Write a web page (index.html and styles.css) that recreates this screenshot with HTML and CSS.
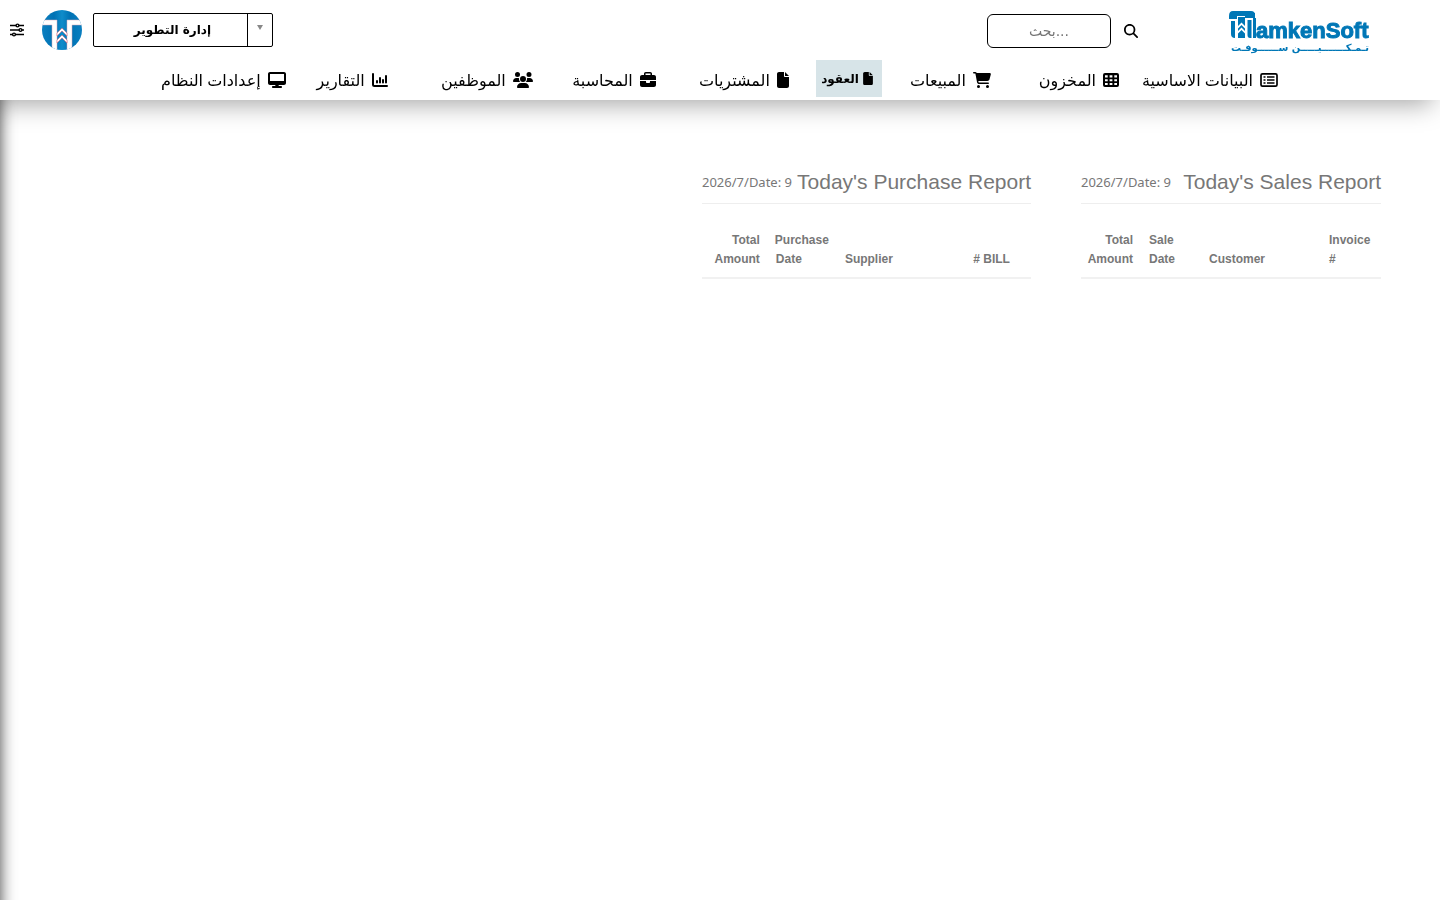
FILE: index.html
```html
<!DOCTYPE html>
<html lang="ar" dir="rtl">
<head>
<meta charset="utf-8">
<title>TamkenSoft</title>
<link rel="stylesheet" href="styles.css">
</head>
<body>
<header class="header">
  <div class="topbar">
    <a class="brand" href="#" aria-label="TamkenSoft">
      <svg class="brand-logo" viewBox="0 0 142 44" direction="ltr">
        <path fill="#0077b6" d="M5 1H23Q27 1 27 5V6H9V9H1V6Q1 1 5 1ZM3 11H7V28Q3 28 3 24ZM10 7H17V16L13.500 12.500L10 16ZM10 18.500L13.500 15L17 18.500V21L13.500 17.500L10 21ZM10 23.500L13.500 20L17 23.500V28H10ZM17 3H27V8H17ZM19.500 10H23.500V28H22Q19.500 28 19.500 25ZM25 8H28V28H25Z"/>
        <text x="28" y="28" class="brand-name">amkenSoft</text>
        <text x="72" y="41" class="brand-sub">تـمـكـــــــيـــــن ســــــوفـت</text>
      </svg>
    </a>
    <form class="search">
      <button class="icon-btn" type="button" aria-label="بحث">
        <svg width="14" height="14" viewBox="0 0 512 512"><path d="M416 208c0 45.900-14.900 88.300-40 122.700L502.600 457.400c12.500 12.500 12.500 32.800 0 45.300s-32.800 12.500-45.300 0L330.700 376c-34.400 25.200-76.800 40-122.700 40C93.100 416 0 322.900 0 208S93.100 0 208 0S416 93.100 416 208zM208 352a144 144 0 1 0 0-288 144 144 0 1 0 0 288z"/></svg>
      </button>
      <input class="search-input" type="text" placeholder="بحث..." aria-label="بحث" dir="ltr">
    </form>
    <div class="account">
      <div class="select-wrap">
        <select class="select" aria-label="الإدارة"><option>إدارة التطوير</option></select>
        <span class="select-arrow"></span>
      </div>
      <svg class="badge-logo" width="40" height="40" viewBox="0 0 40 40">
        <defs>
          <linearGradient id="disc" x1="0" x2="1" y1="0" y2="0"><stop offset="0" stop-color="#0a7fc0"/><stop offset=".3" stop-color="#0072b4"/><stop offset=".5" stop-color="#0f8cca"/><stop offset=".7" stop-color="#0072b4"/><stop offset="1" stop-color="#0a7fc0"/></linearGradient>
          <clipPath id="round"><circle cx="20" cy="20" r="20"/></clipPath>
        </defs>
        <g clip-path="url(#round)">
          <rect width="40" height="40" fill="url(#disc)"/>
          <path d="M0 10H15V40H10V15H0ZM40 10H25V40H30V15H40Z" fill="#fff" stroke="#dba6b4" stroke-width=".5"/>
          <path d="M15 23L20 18L25 23V26L20 21L15 26ZM15 30L20 25L25 30V33L20 28L15 33Z" fill="#fff" stroke="#d34b5c" stroke-width=".5"/>
        </g>
      </svg>
      <button class="icon-btn" type="button" aria-label="خيارات">
        <svg width="14" height="14" viewBox="0 0 14 14" fill="#fff" stroke="#000" stroke-width="1.400"><path d="M0 2.500H14M0 7H14M0 11.500H14"/><circle cx="7.500" cy="2.500" r="1.400"/><circle cx="10.500" cy="7" r="1.400"/><circle cx="4" cy="11.500" r="1.400"/></svg>
      </button>
    </div>
  </div>
  <nav class="nav">
    <a class="nav-item" href="#"><svg width="18" height="16" viewBox="0 0 18 16"><rect x="1" y="1.800" width="16" height="12.400" rx="1.500" fill="none" stroke="#000" stroke-width="1.700"/><path d="M3.500 4.200h2v1.600h-2zM3.500 7.200h2v1.600h-2zM3.500 10.200h2v1.600h-2zM7 4.200h7.500v1.500H7zM7 7.200h7.500v1.500H7zM7 10.200h7.500v1.500H7z"/></svg>البيانات الاساسية</a>
    <a class="nav-item" href="#"><svg width="16" height="16" viewBox="0 0 16 16"><path fill-rule="evenodd" d="M2 1H14Q16 1 16 3V13Q16 15 14 15H2Q0 15 0 13V3Q0 1 2 1ZM2 3.200V5.500H4.700V3.200ZM6.600 3.200V5.500H9.400V3.200ZM11.300 3.200V5.500H14V3.200ZM2 7.200V9.300H4.700V7.200ZM6.600 7.200V9.300H9.400V7.200ZM11.300 7.200V9.300H14V7.200ZM2 11V13H4.700V11ZM6.600 11V13H9.400V11ZM11.300 11V13H14V11Z"/></svg>المخزون</a>
    <a class="nav-item" href="#"><svg width="18" height="16" viewBox="0 0 576 512"><path d="M0 24C0 10.700 10.700 0 24 0H69.500c22 0 41.500 12.800 50.600 32h411c26.300 0 45.500 25 38.600 50.400l-41 152.300c-8.500 31.400-37 53.300-69.500 53.300H170.700l5.400 28.500c2.200 11.300 12.100 19.500 23.600 19.500H488c13.300 0 24 10.700 24 24s-10.700 24-24 24H199.700c-34.600 0-64.300-24.600-70.700-58.500L77.400 54.500c-.7-3.800-4-6.500-7.900-6.500H24C10.700 48 0 37.300 0 24zM128 464a48 48 0 1 1 96 0 48 48 0 1 1-96 0zm336-48a48 48 0 1 1 0 96 48 48 0 1 1 0-96z"/></svg>المبيعات</a>
    <a class="nav-item nav-item-active" href="#"><svg width="10" height="13" viewBox="0 0 384 512"><path d="M0 64C0 28.700 28.700 0 64 0H224V128c0 17.700 14.300 32 32 32H384V448c0 35.300-28.700 64-64 64H64c-35.300 0-64-28.700-64-64V64zm384 64H256V0L384 128z"/></svg>العقود</a>
    <a class="nav-item" href="#"><svg width="12" height="16" viewBox="0 0 384 512"><path d="M0 64C0 28.700 28.700 0 64 0H224V128c0 17.700 14.300 32 32 32H384V448c0 35.300-28.700 64-64 64H64c-35.300 0-64-28.700-64-64V64zm384 64H256V0L384 128z"/></svg>المشتريات</a>
    <a class="nav-item" href="#"><svg width="16" height="16" viewBox="0 0 512 512"><path d="M184 48H328c4.400 0 8 3.600 8 8V96H176V56c0-4.400 3.600-8 8-8zm-56 8V96H64C28.700 96 0 124.700 0 160v96H512V160c0-35.300-28.700-64-64-64H384V56c0-30.900-25.100-56-56-56H184c-30.900 0-56 25.100-56 56zM512 288H320v32c0 17.700-14.300 32-32 32H224c-17.700 0-32-14.300-32-32V288H0V416c0 35.300 28.700 64 64 64H448c35.300 0 64-28.700 64-64V288z"/></svg>المحاسبة</a>
    <a class="nav-item" href="#"><svg width="20" height="16" viewBox="0 0 640 512"><path d="M144 0a80 80 0 1 1 0 160A80 80 0 1 1 144 0zM512 0a80 80 0 1 1 0 160A80 80 0 1 1 512 0zM0 298.700C0 239.800 47.800 192 106.700 192h42.700c15.900 0 31 3.500 44.600 9.700-1.300 7.200-1.900 14.700-1.900 22.300 0 38.200 16.800 72.500 43.300 96H21.300C9.600 320 0 310.400 0 298.700zM405.300 320h-.7c26.600-23.500 43.300-57.800 43.300-96 0-7.600-.7-15-1.900-22.300 13.600-6.300 28.700-9.700 44.600-9.700h42.700C592.200 192 640 239.800 640 298.700c0 11.800-9.600 21.300-21.300 21.300H405.300zM224 224a96 96 0 1 1 192 0 96 96 0 1 1-192 0zM128 485.300C128 411.700 187.700 352 261.300 352H378.700C452.300 352 512 411.700 512 485.300c0 14.700-11.900 26.700-26.700 26.700H154.700c-14.700 0-26.700-11.900-26.700-26.700z"/></svg>الموظفين</a>
    <a class="nav-item" href="#"><svg width="16" height="16" viewBox="0 0 16 16" fill="none" stroke="#000" stroke-width="2" stroke-linecap="round"><path d="M1 2V12.500Q1 14 2.500 14H15M5 9V10.500M8 6V10.500M11 8V10.500M14 4V10.500"/></svg>التقارير</a>
    <a class="nav-item" href="#"><svg width="18" height="16" viewBox="0 0 576 512"><path d="M64 0C28.700 0 0 28.700 0 64V352c0 35.300 28.700 64 64 64H240l-10.700 32H160c-17.700 0-32 14.300-32 32s14.300 32 32 32H416c17.700 0 32-14.300 32-32s-14.300-32-32-32H346.700L336 416H512c35.300 0 64-28.700 64-64V64c0-35.300-28.700-64-64-64H64zM512 64V288H64V64H512z"/></svg>إعدادات النظام</a>
  </nav>
</header>
<div class="side-edge"></div>
<main class="reports">
  <section class="report">
    <div class="report-head"><h2 class="report-title">Today's Sales Report</h2><span class="report-date">Date: 9&rlm;/7/&rlm;2026</span></div>
    <table class="report-table">
      <thead><tr><th class="col-narrow">Invoice #</th><th class="col-wide">Customer</th><th class="col-narrow">Sale Date</th><th class="col-narrow col-total">Total Amount</th></tr></thead>
    </table>
  </section>
  <section class="report">
    <div class="report-head"><h2 class="report-title">Today's Purchase Report</h2><span class="report-date">Date: 9&rlm;/7/&rlm;2026</span></div>
    <table class="report-table">
      <thead><tr><th class="col-narrow">BILL #</th><th class="col-wide">Supplier</th><th class="col-date">Purchase Date</th><th class="col-narrow col-total">Total Amount</th></tr></thead>
    </table>
  </section>
</main>
</body>
</html>
```

FILE: styles.css
```css
* { box-sizing: border-box; }
body {
  margin: 0;
  min-height: 100vh;
  background: #fff;
  color: #000;
  font-family: "Noto Sans", "DejaVu Sans", sans-serif;
  overflow-x: hidden;
}
.header {
  position: relative;
  z-index: 2;
  background: #fff;
  box-shadow: -8px 4px 24px rgba(0, 0, 0, .36);
}
.topbar {
  display: flex;
  align-items: center;
  height: 60px;
  padding: 0 70px 0 10px;
}
.brand { display: block; height: 44px; margin-top: 4px; }
.brand-logo { display: block; width: 142px; height: 44px; }
.brand-name { font: bold 22px "Liberation Sans", sans-serif; direction: ltr; fill: #0077b6; stroke: #0077b6; stroke-width: 1px; }
.brand-sub { font: bold 10px "DejaVu Sans", sans-serif; text-anchor: middle; fill: #0077b6; }
.search { display: flex; align-items: center; gap: 13px; margin: 2px 90px 0 0; }
.icon-btn {
  display: flex;
  padding: 0;
  border: 0;
  background: none;
  cursor: pointer;
}
.search-input {
  width: 124px;
  height: 34px;
  padding: 0 12px;
  border: 1px solid #000;
  border-radius: 6px;
  background: #fff;
  font: 14px "DejaVu Sans", sans-serif;
  text-align: center;
}
.search-input::placeholder { color: #757575; opacity: 1; }
.account { display: flex; align-items: center; gap: 11px; margin-right: auto; }
.account .icon-btn { margin-right: 7px; }
.select-wrap {
  display: grid;
  grid-template-columns: 25px 153px;
  width: 180px;
  height: 34px;
  border: 1px solid #000;
  border-radius: 2px;
}
.select {
  grid-area: 1 / 2;
  padding: 0 8px 0 12px;
  border: 0;
  appearance: none;
  background: none;
  color: #000;
  font: bold 12px "DejaVu Sans", sans-serif;
  text-align: center;
  text-align-last: center;
}
.select-arrow {
  grid-area: 1 / 1;
  display: flex;
  align-items: center;
  justify-content: center;
  border-left: 1px solid #000;
}
.select-arrow::after {
  content: "";
  margin-bottom: 5px;
  border: 3px solid transparent;
  border-top: 5px solid #888;
  border-bottom: 0;
}
.nav {
  display: grid;
  grid-template-columns: 159fr 128fr 109fr 93fr 133fr 123fr 145fr 102fr 124fr;
  align-items: start;
  height: 40px;
  padding: 0 162px 0 161px;
}
.nav-item {
  display: flex;
  align-items: center;
  gap: 7px;
  height: 40px;
  color: #000;
  font-size: 16px;
  white-space: nowrap;
  text-decoration: none;
}
.nav-item svg { flex: none; }
.nav-item-active {
  justify-self: start;
  gap: 4px;
  height: 37px;
  padding: 0 9px 0 5px;
  background: #d7e4e8;
  font-size: 12px;
  font-weight: bold;
}
.side-edge {
  position: fixed;
  z-index: 1;
  top: 0;
  bottom: -40px;
  right: 100%;
  width: 40px;
  box-shadow: 0 0 16px rgba(0, 0, 0, .75);
}
.reports {
  display: grid;
  grid-template-columns: 300fr 329fr 593fr;
  gap: 50px;
  padding: 64px 59px 0;
  color: #777;
}
.report-head {
  display: flex;
  align-items: center;
  justify-content: space-between;
  height: 40px;
  border-bottom: 1px solid #eee;
  white-space: nowrap;
}
.report-title { margin: 0; padding-bottom: 4px; font: 21px "Liberation Sans", sans-serif; }
.report-date { padding-bottom: 4px; font-size: 13px; }
.report-table {
  width: 100%;
  margin-top: 19px;
  border-collapse: collapse;
  table-layout: fixed;
  font: bold 12px/19px "Liberation Sans", sans-serif;
}
.report-table th {
  padding: 8px;
  border-bottom: 2px solid #f1f1f1;
  text-align: left;
  vertical-align: bottom;
}
.report-table .col-total { text-align: right; }
.col-narrow { width: 20%; }
.col-date { width: 21%; }
```
